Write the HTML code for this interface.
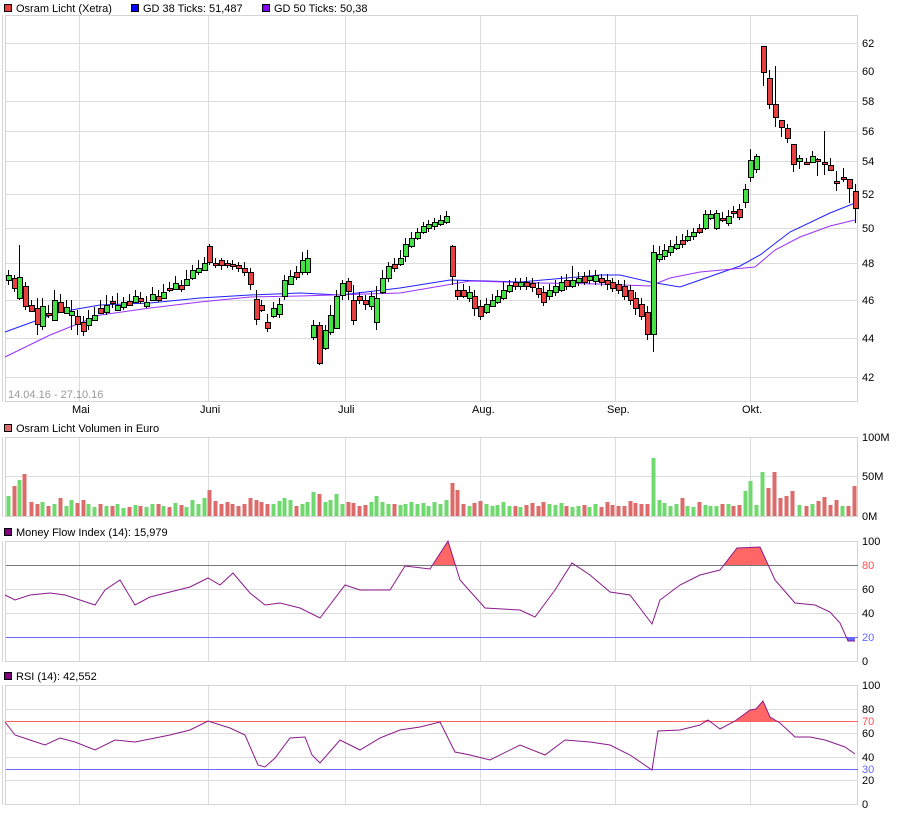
<!DOCTYPE html>
<html><head><meta charset="utf-8"><style>
html,body{margin:0;padding:0;background:#fff;width:900px;height:814px;overflow:hidden}
svg text{font-family:"Liberation Sans",sans-serif;font-size:11px;fill:#000}
.g{stroke:#dcdcdc;stroke-width:1;fill:none}
</style></head><body>
<svg width="900" height="814" xmlns="http://www.w3.org/2000/svg">
<defs>
<clipPath id="c1"><rect x="0" y="0" width="900" height="565"/></clipPath>
<clipPath id="c2"><rect x="0" y="637" width="900" height="30"/></clipPath>
<clipPath id="c3"><rect x="0" y="0" width="900" height="721"/></clipPath>
</defs>
<rect x="4.5" y="4.5" width="7" height="7" fill="#e84040" stroke="#000"/><text x="16" y="12">Osram Licht (Xetra)</text>
<rect x="131.5" y="4.5" width="7" height="7" fill="#0000ff" stroke="#000"/><text x="143" y="12">GD 38 Ticks: 51,487</text>
<rect x="262.5" y="4.5" width="7" height="7" fill="#8000ff" stroke="#000"/><text x="274" y="12">GD 50 Ticks: 50,38</text>

<rect x="5.5" y="15.5" width="852" height="386" fill="#fff" stroke="#d4d4d4"/>
<line x1="2.5" y1="15" x2="2.5" y2="402" stroke="#d4d4d4"/>
<path class="g" d="M79.5 16V401M208.5 16V401M345.5 16V401M480.5 16V401M615.5 16V401M750.5 16V401M6 43.5H858M6 71.5H858M6 101.5H858M6 131.5H858M6 161.5H858M6 194.5H858M6 228.5H858M6 263.5H858M6 300.5H858M6 338.5H858M6 377.5H858"/>
<text x="862" y="47">62</text><text x="862" y="75">60</text><text x="862" y="105">58</text><text x="862" y="135">56</text><text x="862" y="165">54</text><text x="862" y="198">52</text><text x="862" y="232">50</text><text x="862" y="267">48</text><text x="862" y="304">46</text><text x="862" y="342">44</text><text x="862" y="381">42</text>
<text x="72" y="413">Mai</text><text x="200" y="413">Juni</text><text x="338" y="413">Juli</text><text x="472" y="413">Aug.</text><text x="607" y="413">Sep.</text><text x="742" y="413">Okt.</text>
<text x="8" y="398" style="fill:#999">14.04.16 - 27.10.16</text>

<path d="M5 332L60 312L100 305L150 303L200 298L250 295L300 293L340 295L400 288L450 280L520 282L600 275L620 275L650 282L680 287L700 280L740 266L760 255L790 232L830 213L855 203" fill="none" stroke="#2020ff"/>
<path d="M5 357L50 335L100 315L150 308L200 302L250 297L300 296L400 293L470 281L540 283L600 284L650 286L670 278L700 272L755 267L775 250L800 237L830 226L855 220" fill="none" stroke="#9a30ff"/>

<path stroke="#000" fill="none" d="M8.5 270V285M14.5 275V292M19.5 245V300M25.5 282V310M31.5 300V312M37.5 298V335M42.5 298V330M48.5 305V318M54.5 290V320M60.5 294V312M66.5 300V314M71.5 300V330M77.5 310V335M83.5 316V336M88.5 310V330M94.5 307V320M100.5 300V314M106.5 295V315M112.5 296V308M117.5 293V310M123.5 297V310M129.5 294V306M135.5 290V302M140.5 292V304M146.5 296V308M152.5 287V300M158.5 290V302M163.5 284V298M169.5 282V292M175.5 276V290M181.5 280V292M186.5 270V285M192.5 265V280M198.5 260V275M204.5 257V270M209.5 244V265M215.5 258V268M221.5 258V270M227.5 260V268M232.5 260V270M238.5 262V272M244.5 262V276M250.5 268V290M256.5 290V325M261.5 300V312M267.5 314V332M273.5 302V318M279.5 298V318M284.5 275V300M290.5 270V285M296.5 266V280M302.5 252V275M307.5 250V275M313.5 320V340M319.5 322V365M325.5 325V350M330.5 305V335M336.5 290V328M342.5 280V300M348.5 278V300M353.5 285V325M359.5 292V304M365.5 295V310M371.5 292V310M376.5 286V330M382.5 270V294M388.5 262V282M394.5 258V272M400.5 250V266M405.5 238V262M411.5 232V248M417.5 228V240M423.5 222V234M428.5 220V232M434.5 218V230M440.5 215V226M446.5 211V224M452.5 245V285M457.5 280V300M463.5 284V298M469.5 286V302M474.5 290V316M480.5 300V320M486.5 298V314M492.5 294V306M497.5 290V304M503.5 282V300M509.5 280V293M515.5 278V290M520.5 278V290M526.5 277V290M532.5 278V292M538.5 282V298M543.5 286V306M549.5 284V300M555.5 280V296M561.5 276V292M566.5 274V290M572.5 266V288M578.5 272V286M584.5 272V285M589.5 270V284M595.5 270V285M601.5 274V286M607.5 274V290M612.5 278V292M618.5 280V294M624.5 280V300M630.5 285V305M635.5 292V315M641.5 298V320M647.5 306V340M653.5 245V352M659.5 246V262M664.5 244V260M670.5 240V256M676.5 236V250M682.5 234V248M687.5 230V242M693.5 228V240M699.5 224V234M705.5 210V230M710.5 210V220M716.5 210V230M722.5 212V222M728.5 210V226M733.5 206V218M739.5 204V220M745.5 184V208M750.5 149V182M756.5 154V173M763.5 46V86M769.5 70V109M775.5 66V127M781.5 120V137M787.5 124V143M793.5 144V172M799.5 155V169M806.5 158V165M812.5 151V163M817.5 158V176M824.5 131V175M830.5 158V171M836.5 171V191M843.5 168V182M849.5 179V203M855.5 184V223"/>
<path fill="#44e044" stroke="#000" d="M6.5 275.5h5v5h-5zM17.5 277.5h5v21h-5zM40.5 306.5h5v20h-5zM52.5 300.5h5v20h-5zM64.5 307.5h5v6h-5zM69.5 311.5h5v4h-5zM86.5 318.5h5v7h-5zM92.5 315.5h5v5h-5zM104.5 305.5h5v7h-5zM115.5 305.5h5v5h-5zM121.5 302.5h5v5h-5zM133.5 296.5h5v6h-5zM144.5 302.5h5v4h-5zM150.5 294.5h5v6h-5zM161.5 292.5h5v6h-5zM173.5 283.5h5v6h-5zM184.5 279.5h5v6h-5zM190.5 270.5h5v8h-5zM196.5 268.5h5v4h-5zM202.5 263.5h5v7h-5zM271.5 308.5h5v8h-5zM277.5 304.5h5v10h-5zM282.5 280.5h5v16h-5zM288.5 276.5h5v8h-5zM300.5 260.5h5v12h-5zM305.5 258.5h5v14h-5zM311.5 325.5h5v12h-5zM323.5 330.5h5v18h-5zM328.5 315.5h5v17h-5zM334.5 296.5h5v32h-5zM340.5 283.5h5v12h-5zM369.5 296.5h5v10h-5zM374.5 298.5h5v24h-5zM380.5 278.5h5v14h-5zM386.5 266.5h5v12h-5zM398.5 258.5h5v6h-5zM403.5 244.5h5v12h-5zM409.5 238.5h5v8h-5zM415.5 232.5h5v6h-5zM421.5 226.5h5v6h-5zM426.5 224.5h5v4h-5zM432.5 222.5h5v4h-5zM438.5 220.5h5v4h-5zM444.5 216.5h5v6h-5zM467.5 292.5h5v6h-5zM484.5 304.5h5v8h-5zM490.5 300.5h5v6h-5zM495.5 296.5h5v6h-5zM501.5 290.5h5v8h-5zM507.5 285.5h5v6h-5zM518.5 282.5h5v4h-5zM547.5 290.5h5v6h-5zM553.5 286.5h5v6h-5zM559.5 282.5h5v8h-5zM570.5 280.5h5v6h-5zM576.5 278.5h5v4h-5zM587.5 276.5h5v4h-5zM593.5 275.5h5v6h-5zM651.5 252.5h5v82h-5zM657.5 254.5h5v5h-5zM662.5 250.5h5v6h-5zM668.5 246.5h5v6h-5zM674.5 244.5h5v4h-5zM685.5 236.5h5v4h-5zM691.5 232.5h5v4h-5zM703.5 214.5h5v14h-5zM708.5 214.5h5v4h-5zM714.5 213.5h5v15h-5zM726.5 216.5h5v7h-5zM743.5 189.5h5v13h-5zM748.5 160.5h5v17h-5zM754.5 156.5h5v13h-5zM797.5 158.5h5v3h-5zM810.5 156.5h5v6h-5z"/>
<path fill="#e84040" stroke="#000" d="M12.5 278.5h5v10h-5zM23.5 286.5h5v20h-5zM29.5 305.5h5v6h-5zM35.5 308.5h5v16h-5zM46.5 313.5h5v2h-5zM58.5 302.5h5v10h-5zM75.5 316.5h5v8h-5zM81.5 322.5h5v9h-5zM98.5 308.5h5v5h-5zM110.5 301.5h5v2h-5zM127.5 301.5h5v4h-5zM138.5 298.5h5v3h-5zM156.5 296.5h5v4h-5zM167.5 288.5h5v2h-5zM179.5 285.5h5v4h-5zM207.5 246.5h5v16h-5zM213.5 263.5h5v2h-5zM219.5 260.5h5v5h-5zM225.5 263.5h5v2h-5zM230.5 264.5h5v2h-5zM236.5 265.5h5v3h-5zM242.5 268.5h5v4h-5zM248.5 272.5h5v12h-5zM254.5 299.5h5v20h-5zM259.5 305.5h5v5h-5zM265.5 322.5h5v6h-5zM294.5 272.5h5v5h-5zM317.5 325.5h5v38h-5zM346.5 281.5h5v10h-5zM351.5 300.5h5v20h-5zM357.5 296.5h5v4h-5zM363.5 300.5h5v4h-5zM392.5 264.5h5v4h-5zM450.5 246.5h5v30h-5zM455.5 290.5h5v6h-5zM461.5 290.5h5v6h-5zM472.5 296.5h5v12h-5zM478.5 306.5h5v10h-5zM513.5 282.5h5v4h-5zM524.5 282.5h5v4h-5zM530.5 283.5h5v4h-5zM536.5 288.5h5v6h-5zM541.5 292.5h5v10h-5zM564.5 280.5h5v6h-5zM582.5 276.5h5v6h-5zM599.5 278.5h5v4h-5zM605.5 280.5h5v4h-5zM610.5 282.5h5v6h-5zM616.5 284.5h5v6h-5zM622.5 286.5h5v10h-5zM628.5 290.5h5v10h-5zM633.5 298.5h5v10h-5zM639.5 304.5h5v12h-5zM645.5 312.5h5v22h-5zM680.5 240.5h5v4h-5zM697.5 228.5h5v4h-5zM720.5 218.5h5v2h-5zM731.5 211.5h5v2h-5zM737.5 209.5h5v8h-5zM761.5 46.5h5v26h-5zM767.5 78.5h5v26h-5zM773.5 104.5h5v13h-5zM779.5 120.5h5v7h-5zM785.5 128.5h5v10h-5zM791.5 144.5h5v20h-5zM804.5 162.5h5v2h-5zM815.5 159.5h5v2h-5zM822.5 162.5h5v2h-5zM828.5 165.5h5v5h-5zM834.5 181.5h5v2h-5zM841.5 177.5h5v2h-5zM847.5 179.5h5v9h-5zM853.5 191.5h5v17h-5z"/>

<rect x="4.5" y="424.5" width="7" height="7" fill="#dc6b6b" stroke="#000"/><text x="16" y="432">Osram Licht Volumen in Euro</text>
<rect x="5.5" y="437.5" width="852" height="79" fill="#fff" stroke="#d4d4d4"/>
<line x1="2.5" y1="437" x2="2.5" y2="517" stroke="#d4d4d4"/>
<path class="g" d="M79.5 438V516M208.5 438V516M345.5 438V516M480.5 438V516M615.5 438V516M750.5 438V516M6 476.5H858"/>
<text x="862" y="441">100M</text><text x="862" y="480">50M</text><text x="862" y="520">0M</text>
<path fill="#6fd86f" d="M6.5 516v-20h4v20zM17.5 516v-36h4v36zM40.5 516v-14h4v14zM52.5 516v-12h4v12zM64.5 516v-10h4v10zM69.5 516v-16h4v16zM86.5 516v-12h4v12zM92.5 516v-9h4v9zM104.5 516v-10h4v10zM115.5 516v-12h4v12zM121.5 516v-8h4v8zM133.5 516v-11h4v11zM144.5 516v-9h4v9zM150.5 516v-12h4v12zM161.5 516v-10h4v10zM173.5 516v-13h4v13zM184.5 516v-9h4v9zM190.5 516v-16h4v16zM196.5 516v-12h4v12zM202.5 516v-18h4v18zM271.5 516v-12h4v12zM277.5 516v-15h4v15zM282.5 516v-18h4v18zM288.5 516v-16h4v16zM300.5 516v-12h4v12zM305.5 516v-14h4v14zM311.5 516v-24h4v24zM323.5 516v-14h4v14zM328.5 516v-16h4v16zM334.5 516v-22h4v22zM340.5 516v-12h4v12zM369.5 516v-14h4v14zM374.5 516v-20h4v20zM380.5 516v-14h4v14zM386.5 516v-12h4v12zM398.5 516v-11h4v11zM403.5 516v-12h4v12zM409.5 516v-14h4v14zM415.5 516v-12h4v12zM421.5 516v-13h4v13zM426.5 516v-10h4v10zM432.5 516v-14h4v14zM438.5 516v-12h4v12zM444.5 516v-16h4v16zM467.5 516v-10h4v10zM484.5 516v-12h4v12zM490.5 516v-10h4v10zM495.5 516v-11h4v11zM501.5 516v-14h4v14zM507.5 516v-10h4v10zM518.5 516v-9h4v9zM547.5 516v-12h4v12zM553.5 516v-11h4v11zM559.5 516v-13h4v13zM570.5 516v-9h4v9zM576.5 516v-10h4v10zM587.5 516v-9h4v9zM593.5 516v-12h4v12zM651.5 516v-58h4v58zM657.5 516v-16h4v16zM662.5 516v-13h4v13zM668.5 516v-10h4v10zM674.5 516v-12h4v12zM685.5 516v-10h4v10zM691.5 516v-9h4v9zM703.5 516v-11h4v11zM708.5 516v-10h4v10zM714.5 516v-10h4v10zM726.5 516v-12h4v12zM743.5 516v-25h4v25zM748.5 516v-35h4v35zM754.5 516v-11h4v11zM760.5 516v-44h4v44zM797.5 516v-11h4v11zM810.5 516v-12h4v12zM840.5 516v-10h4v10z"/>
<path fill="#dc6b6b" d="M12.5 516v-30h4v30zM22.5 516v-42h4v42zM29.5 516v-14h4v14zM35.5 516v-12h4v12zM46.5 516v-10h4v10zM58.5 516v-18h4v18zM75.5 516v-13h4v13zM81.5 516v-16h4v16zM98.5 516v-12h4v12zM110.5 516v-10h4v10zM127.5 516v-9h4v9zM138.5 516v-10h4v10zM156.5 516v-12h4v12zM167.5 516v-9h4v9zM179.5 516v-11h4v11zM207.5 516v-26h4v26zM213.5 516v-15h4v15zM219.5 516v-12h4v12zM225.5 516v-14h4v14zM230.5 516v-12h4v12zM236.5 516v-10h4v10zM242.5 516v-12h4v12zM248.5 516v-18h4v18zM254.5 516v-16h4v16zM259.5 516v-14h4v14zM265.5 516v-12h4v12zM294.5 516v-10h4v10zM317.5 516v-22h4v22zM346.5 516v-14h4v14zM351.5 516v-13h4v13zM357.5 516v-10h4v10zM363.5 516v-11h4v11zM392.5 516v-12h4v12zM450.5 516v-33h4v33zM455.5 516v-26h4v26zM461.5 516v-12h4v12zM472.5 516v-13h4v13zM478.5 516v-15h4v15zM513.5 516v-10h4v10zM524.5 516v-11h4v11zM530.5 516v-13h4v13zM536.5 516v-10h4v10zM541.5 516v-14h4v14zM564.5 516v-10h4v10zM582.5 516v-11h4v11zM599.5 516v-9h4v9zM605.5 516v-14h4v14zM610.5 516v-11h4v11zM616.5 516v-10h4v10zM622.5 516v-10h4v10zM628.5 516v-15h4v15zM633.5 516v-13h4v13zM639.5 516v-12h4v12zM645.5 516v-12h4v12zM680.5 516v-18h4v18zM697.5 516v-14h4v14zM720.5 516v-12h4v12zM731.5 516v-10h4v10zM737.5 516v-11h4v11zM766.5 516v-28h4v28zM772.5 516v-44h4v44zM778.5 516v-18h4v18zM784.5 516v-20h4v20zM790.5 516v-25h4v25zM804.5 516v-10h4v10zM816.5 516v-15h4v15zM822.5 516v-19h4v19zM828.5 516v-11h4v11zM834.5 516v-16h4v16zM846.5 516v-10h4v10zM852.5 516v-30h4v30z"/>

<rect x="4.5" y="528.5" width="7" height="7" fill="#800080" stroke="#000"/><text x="16" y="536">Money Flow Index (14): 15,979</text>
<rect x="5.5" y="541.5" width="852" height="120" fill="#fff" stroke="#d4d4d4"/>
<line x1="2.5" y1="541" x2="2.5" y2="662" stroke="#d4d4d4"/>
<path class="g" d="M79.5 542V661M208.5 542V661M345.5 542V661M480.5 542V661M615.5 542V661M750.5 542V661M6 589.5H858M6 613.5H858"/>
<path clip-path="url(#c1)" fill="#ff6666" d="M5 565L405 566L430 569L448 541L460 580L720 570L737 548L760 547L775 580L855 565Z"/>
<path clip-path="url(#c2)" fill="#6666ff" d="M830 637L840 623L848 641L855 641L855 637Z"/>
<line x1="6" y1="565.5" x2="858" y2="565.5" stroke="#777"/><line x1="6" y1="637.5" x2="858" y2="637.5" stroke="#6a6aff"/>
<path fill="none" stroke="#8b1a8b" d="M5 595L15 600L30 595L50 593L65 595L80 600L95 605L105 590L120 580L135 605L150 597L170 592L190 587L208 578L220 585L233 573L250 593L265 605L280 603L300 608L320 618L345 585L360 590L390 590L405 566L430 569L448 541L460 580L485 608L520 610L535 617L555 590L572 563L590 575L610 592L630 595L652 624L660 600L680 585L700 575L720 570L737 548L760 547L775 580L795 603L815 605L830 612L840 623L848 641L855 641"/>
<text x="862" y="545">100</text><text x="862" y="569" style="fill:#ff5050">80</text><text x="862" y="593">60</text><text x="862" y="617">40</text><text x="862" y="641" style="fill:#6666ff">20</text><text x="862" y="665">0</text>

<rect x="4.5" y="672.5" width="7" height="7" fill="#800080" stroke="#000"/><text x="16" y="680">RSI (14): 42,552</text>
<rect x="5.5" y="685.5" width="852" height="119" fill="#fff" stroke="#d4d4d4"/>
<line x1="2.5" y1="685" x2="2.5" y2="805" stroke="#d4d4d4"/>
<path class="g" d="M79.5 686V804M208.5 686V804M345.5 686V804M480.5 686V804M615.5 686V804M750.5 686V804M6 709.5H858M6 733.5H858M6 757.5H858M6 780.5H858"/>
<path clip-path="url(#c3)" fill="#ff6666" d="M700 721L708 720L720 729L735 721L750 710L756 709L763 701L770 717L780 723L790 721Z"/>
<line x1="6" y1="721.5" x2="858" y2="721.5" stroke="#ff6060"/><line x1="6" y1="769.5" x2="858" y2="769.5" stroke="#6a6aff"/>
<path fill="none" stroke="#8b1a8b" d="M5 722L15 735L30 740L45 745L60 738L75 742L95 750L115 740L135 742L155 738L170 735L190 730L208 721L230 728L245 735L258 765L265 767L275 758L290 738L305 737L312 755L320 763L340 740L360 750L380 738L400 730L420 727L440 722L455 752L470 755L490 760L520 745L545 755L565 740L590 742L610 745L630 755L652 770L658 731L680 730L700 725L708 720L720 729L735 721L750 710L756 709L763 701L770 717L780 723L795 737L810 737L825 740L845 747L855 754"/>
<text x="862" y="689">100</text><text x="862" y="713">80</text><text x="862" y="725" style="fill:#ff5050">70</text><text x="862" y="737">60</text><text x="862" y="761">40</text><text x="862" y="773" style="fill:#6666ff">30</text><text x="862" y="784">20</text><text x="862" y="808">0</text>
</svg>
</body></html>
